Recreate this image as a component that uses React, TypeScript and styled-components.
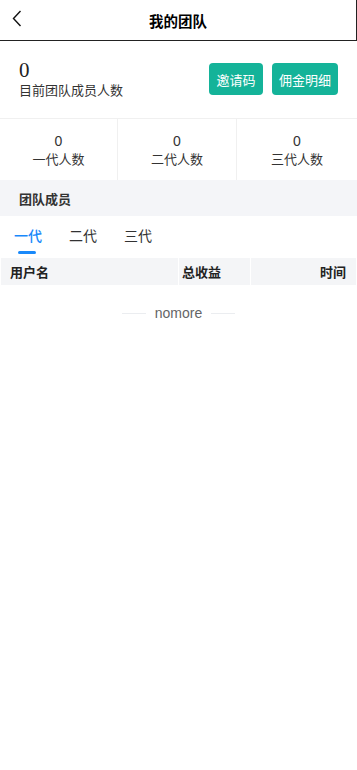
import React from "react";
import styled, { createGlobalStyle } from "styled-components";

const Global = createGlobalStyle`
  html, body { margin: 0; padding: 0; background: #fff; }
  body { font-family: "Liberation Sans", "Noto Sans CJK SC", sans-serif; color: #323233; }
  * { box-sizing: border-box; }
`;

const Page = styled.div`
  width: 357px;
  min-height: 770px;
  background: #fff;
`;

const Header = styled.header`
  position: relative;
  height: 41px;
  border-right: 1px solid #222;
  border-bottom: 1px solid #222;
  display: flex;
  align-items: center;
  justify-content: center;
`;

const Back = styled.button`
  position: absolute;
  left: 8px;
  top: 8px;
  width: 18px;
  height: 20px;
  border: 0;
  background: none;
  padding: 0;
  display: flex;
  align-items: center;
  justify-content: center;
`;

const Title = styled.h1`
  margin: 0;
  font-size: 14.5px;
  font-weight: 700;
  color: #000;
`;

const Summary = styled.section`
  height: 77px;
  padding: 18px 19px 0 19px;
  display: flex;
  justify-content: space-between;
  align-items: flex-start;
`;

const CountBlock = styled.div`
  display: flex;
  flex-direction: column;
`;

const BigNum = styled.div`
  font-family: "Liberation Serif", serif;
  font-size: 21px;
  line-height: 22px;
  color: #222;
`;

const CountLabel = styled.div`
  font-size: 13px;
  line-height: 20px;
  color: #333;
`;

const Buttons = styled.div`
  display: flex;
  gap: 9px;
  margin-top: 4px;
`;

const ActionButton = styled.button<{ $w: number }>`
  width: ${(p) => p.$w}px;
  height: 32px;
  border: 0;
  border-radius: 4px;
  background: #14b399;
  color: #fff;
  font-size: 13px;
  font-family: inherit;
  padding: 0;
`;

const Stats = styled.div`
  display: grid;
  grid-template-columns: 118px 119px 1fr;
  border-top: 1px solid #f0f0f0;
  height: 62px;
`;

const StatCell = styled.div`
  display: flex;
  flex-direction: column;
  align-items: center;
  justify-content: center;
  border-right: 1px solid #f0f0f0;
  &:last-child { border-right: 0; }
  padding-top: 2px;
`;

const StatNum = styled.div`
  font-size: 14px;
  line-height: 17px;
  color: #333;
`;

const StatLabel = styled.div`
  font-size: 13px;
  line-height: 19px;
  color: #333;
`;

const SectionBar = styled.div`
  height: 36px;
  background: #f4f5f8;
  display: flex;
  align-items: center;
  padding-left: 19px;
  font-size: 13px;
  font-weight: 700;
  color: #333;
`;

const Tabs = styled.div`
  height: 42px;
  display: flex;
  padding-left: 14px;
  gap: 27px;
`;

const Tab = styled.div<{ $active?: boolean }>`
  position: relative;
  font-size: 14px;
  line-height: 20px;
  padding-top: 10px;
  font-weight: ${(p) => (p.$active ? 500 : 400)};
  color: ${(p) => (p.$active ? "#1989fa" : "#323233")};
  &::after {
    content: "";
    display: ${(p) => (p.$active ? "block" : "none")};
    position: absolute;
    left: 4px;
    top: 35px;
    width: 18px;
    height: 3px;
    border-radius: 2px;
    background: #1989fa;
  }
`;

const TableHead = styled.div`
  margin: 0 1px;
  height: 27px;
  display: grid;
  grid-template-columns: 177px 71px 1fr;
  column-gap: 1px;
`;

const HeadCell = styled.div<{ $align?: string }>`
  background: #f4f5f7;
  font-size: 13px;
  font-weight: 700;
  color: #222;
  display: flex;
  align-items: center;
  justify-content: ${(p) => p.$align || "flex-start"};
  padding: 0 10px 0 ${(p) => (p.$align === "flex-end" ? "0" : "9px")};
  &:nth-child(2) { padding-left: 3px; }
`;

const NoMore = styled.div`
  display: flex;
  align-items: center;
  justify-content: center;
  gap: 9px;
  margin-top: 20px;
  font-size: 14px;
  color: #646566;
  &::before, &::after {
    content: "";
    width: 24px;
    height: 1px;
    background: #ebedf0;
  }
`;

export default function App() {
  return (
    <Page>
      <Global />
      <Header>
        <Back aria-label="back">
          <svg width="10" height="17" viewBox="0 0 10 17">
            <path d="M8.5 1 L1.5 8.5 L8.5 16" fill="none" stroke="#111" strokeWidth="1.4" />
          </svg>
        </Back>
        <Title>我的团队</Title>
      </Header>
      <Summary>
        <CountBlock>
          <BigNum>0</BigNum>
          <CountLabel>目前团队成员人数</CountLabel>
        </CountBlock>
        <Buttons>
          <ActionButton $w={54}>邀请码</ActionButton>
          <ActionButton $w={66}>佣金明细</ActionButton>
        </Buttons>
      </Summary>
      <Stats>
        <StatCell>
          <StatNum>0</StatNum>
          <StatLabel>一代人数</StatLabel>
        </StatCell>
        <StatCell>
          <StatNum>0</StatNum>
          <StatLabel>二代人数</StatLabel>
        </StatCell>
        <StatCell>
          <StatNum>0</StatNum>
          <StatLabel>三代人数</StatLabel>
        </StatCell>
      </Stats>
      <SectionBar>团队成员</SectionBar>
      <Tabs>
        <Tab $active>一代</Tab>
        <Tab>二代</Tab>
        <Tab>三代</Tab>
      </Tabs>
      <TableHead>
        <HeadCell>用户名</HeadCell>
        <HeadCell>总收益</HeadCell>
        <HeadCell $align="flex-end">时间</HeadCell>
      </TableHead>
      <NoMore>nomore</NoMore>
    </Page>
  );
}
